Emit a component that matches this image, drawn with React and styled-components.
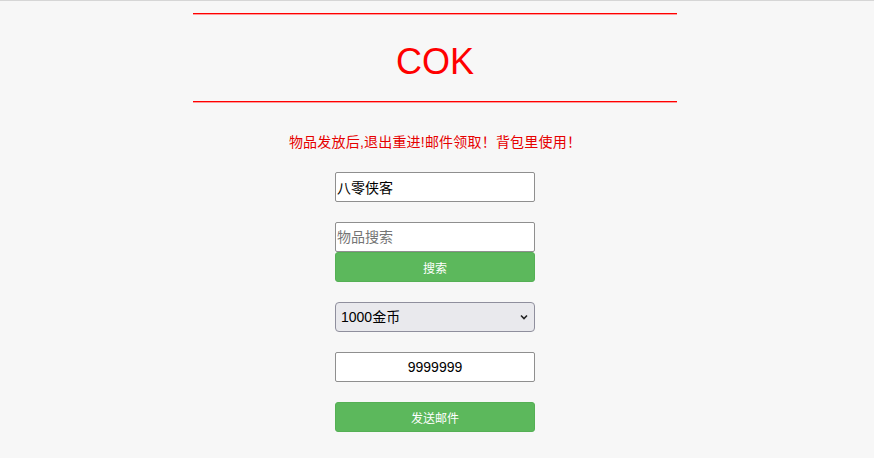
import React, { useState } from "react";
import styled, { createGlobalStyle } from "styled-components";

const GlobalStyle = createGlobalStyle`
  html, body {
    margin: 0;
    padding: 0;
    background: #f7f7f7;
    font-family: "Liberation Sans", "Noto Sans CJK SC", sans-serif;
  }
`;

const items = ["1000金币", "5000金币", "10000金币", "体力药水", "加速道具"];

export default function App() {
  const [role, setRole] = useState("八零侠客");
  const [search, setSearch] = useState("");
  const [item, setItem] = useState(items[0]);
  const [amount, setAmount] = useState("9999999");

  function handleSubmit(e) {
    e.preventDefault();
  }

  return (
    <Page>
      <GlobalStyle />
      <Container>
        <Rule />
        <Title>COK</Title>
        <Rule />
        <Notice>物品发放后,退出重进!邮件领取！背包里使用！</Notice>
        <Form onSubmit={handleSubmit}>
          <TextInput value={role} onChange={(e) => setRole(e.target.value)} />
          <Group>
            <TextInput
              placeholder="物品搜索"
              value={search}
              onChange={(e) => setSearch(e.target.value)}
            />
            <Button type="button">搜索</Button>
          </Group>
          <SelectWrap>
            <Select value={item} onChange={(e) => setItem(e.target.value)}>
              {items.map((it) => (
                <option key={it} value={it}>
                  {it}
                </option>
              ))}
            </Select>
            <Chevron viewBox="0 0 10 10">
              <path d="M2 3.5 L5 6.5 L8 3.5" fill="none" stroke="#222" strokeWidth="1.6" />
            </Chevron>
          </SelectWrap>
          <TextInput
            center
            value={amount}
            onChange={(e) => setAmount(e.target.value)}
          />
          <Button type="submit">发送邮件</Button>
        </Form>
      </Container>
    </Page>
  );
}

const Page = styled.div`
  border-top: 1px solid #d6d6d6;
  padding: 12px 4px 0 0;
  min-height: 445px;
`;

const Container = styled.div`
  width: 484px;
  margin: 0 auto;
`;

const Rule = styled.div`
  height: 1px;
  background: #ff0000;
  box-shadow: 0 1px 0 #ff9a9a;
`;

const Title = styled.h1`
  margin: 0;
  padding: 27px 0 19px;
  font-size: 36px;
  line-height: 41px;
  font-weight: normal;
  color: #ff0000;
  text-align: center;
`;

const Notice = styled.p`
  margin: 30px 0 0;
  font-size: 14px;
  line-height: 20px;
  letter-spacing: 0.2px;
  color: #e60000;
  text-align: center;
`;

const Form = styled.form`
  display: flex;
  flex-direction: column;
  align-items: center;
  gap: 20px;
  margin-top: 20px;
`;

const Group = styled.div`
  display: flex;
  flex-direction: column;
  width: 200px;
`;

const TextInput = styled.input`
  box-sizing: border-box;
  width: 200px;
  height: 30px;
  padding: 0 1px;
  border: 1px solid #8f8f8f;
  border-radius: 2px;
  background: #fff;
  font-family: "Liberation Sans", "Noto Sans CJK SC", sans-serif;
  font-size: 14px;
  color: #000;
  text-align: ${(p) => (p.center ? "center" : "left")};
  outline: none;
  &::placeholder {
    color: #757575;
  }
`;

const Button = styled.button`
  box-sizing: border-box;
  width: 200px;
  height: 30px;
  border: 1px solid #55b055;
  border-radius: 3px;
  background: #5cb85c;
  color: #fff;
  font-family: "Liberation Sans", "Noto Sans CJK SC", sans-serif;
  font-size: 12px;
  cursor: pointer;
`;

const SelectWrap = styled.div`
  position: relative;
  width: 200px;
  height: 30px;
`;

const Select = styled.select`
  box-sizing: border-box;
  width: 200px;
  height: 30px;
  padding: 0 24px 0 5px;
  appearance: none;
  border: 1px solid #8f8f9d;
  border-radius: 4px;
  background: #e9e9ed;
  font-family: "Liberation Sans", "Noto Sans CJK SC", sans-serif;
  font-size: 14px;
  color: #000;
  outline: none;
`;

const Chevron = styled.svg`
  position: absolute;
  right: 6px;
  top: 10px;
  width: 10px;
  height: 10px;
  pointer-events: none;
`;
